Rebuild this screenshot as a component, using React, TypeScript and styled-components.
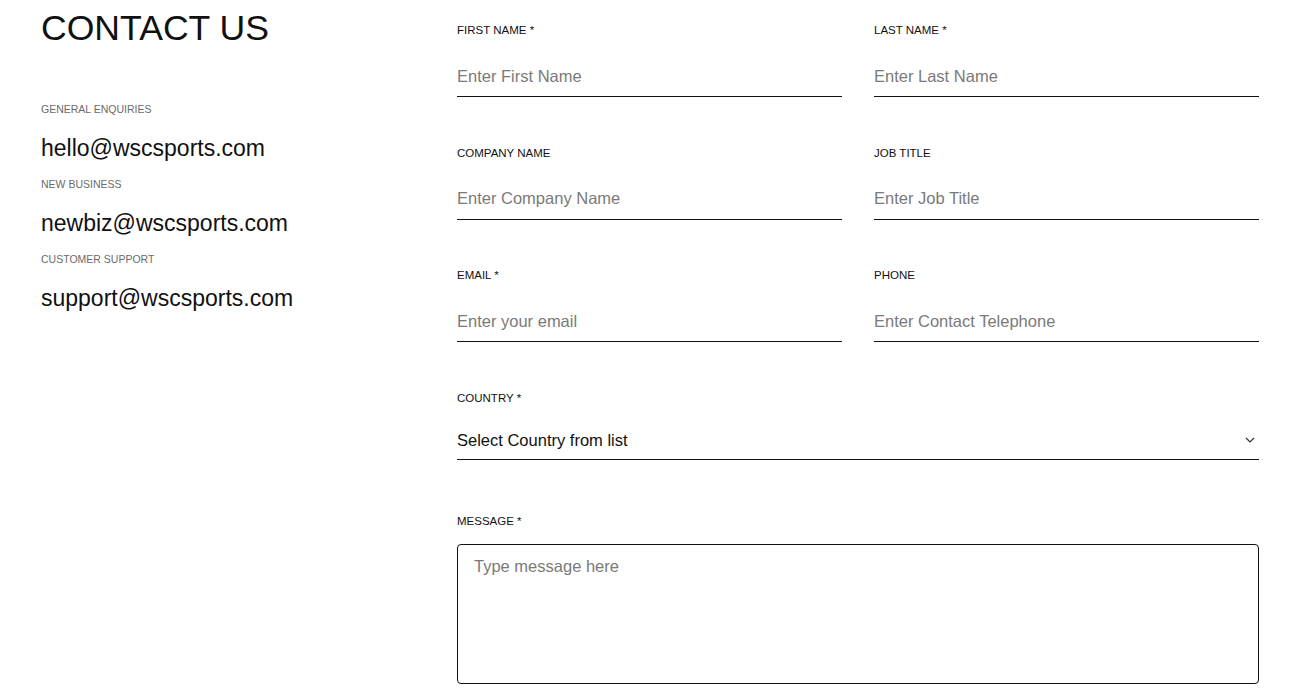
import React from "react";
import styled, { createGlobalStyle } from "styled-components";

const Global = createGlobalStyle`
  html, body { margin: 0; padding: 0; background: #fff; }
  body { font-family: "Liberation Sans", Arial, sans-serif; color: #111; }
  * { box-sizing: border-box; }
`;

const Page = styled.div`
  display: flex;
  padding: 0 0 0 41px;
  width: 1312px;
`;

const Side = styled.aside`
  width: 416px;
  flex: none;
  display: flex;
  flex-direction: column;
`;

const Title = styled.h1`
  margin: 4px 0 0;
  font-size: 35.6px;
  line-height: 48px;
  font-weight: 400;
  color: #111;
`;

const ContactList = styled.div`
  display: flex;
  flex-direction: column;
  margin-top: 50px;
`;

const ContactLabel = styled.div`
  font-size: 10.5px;
  line-height: 14px;
  color: #6b6b6b;
  text-transform: uppercase;
`;

const ContactEmail = styled.div`
  font-size: 23px;
  line-height: 28px;
  color: #111;
  margin: 18px 0 15px;
`;

const Form = styled.form`
  width: 802px;
  display: flex;
  flex-direction: column;
  padding-top: 22px;
`;

const Row = styled.div`
  display: grid;
  grid-template-columns: 1fr 1fr;
  column-gap: 32px;
  margin-bottom: 47.5px;
`;

const Field = styled.div<{ $gap?: number }>`
  display: flex;
  flex-direction: column;
  gap: ${(p) => p.$gap ?? 15}px;
`;

const Label = styled.label`
  font-size: 11.5px;
  line-height: 16px;
  color: #111;
  text-transform: uppercase;
`;

const Input = styled.input`
  height: 44px;
  border: none;
  border-bottom: 1px solid #111;
  padding: 3px 0 0;
  font-family: "Liberation Sans", Arial, sans-serif;
  font-size: 16.5px;
  color: #111;
  outline: none;
  background: transparent;
  &::placeholder { color: #7a7a7a; }
`;

const SelectBox = styled.div`
  height: 38px;
  border-bottom: 1px solid #111;
  display: flex;
  align-items: center;
  justify-content: space-between;
  padding: 0 4px 0 0;
  font-size: 16.5px;
  color: #111;
  margin-bottom: 53px;
`;

const TextArea = styled.textarea`
  height: 140px;
  border: 1px solid #111;
  border-radius: 4px;
  padding: 12px 16px;
  font-family: "Liberation Sans", Arial, sans-serif;
  font-size: 16.5px;
  resize: none;
  outline: none;
  &::placeholder { color: #7a7a7a; }
`;

const contacts = [
  ["General Enquiries", "hello@wscsports.com"],
  ["New Business", "newbiz@wscsports.com"],
  ["Customer Support", "support@wscsports.com"],
];

const rows = [
  [
    ["First Name *", "Enter First Name"],
    ["Last Name *", "Enter Last Name"],
  ],
  [
    ["Company Name", "Enter Company Name"],
    ["Job Title", "Enter Job Title"],
  ],
  [
    ["Email *", "Enter your email"],
    ["Phone", "Enter Contact Telephone"],
  ],
];

export default function App() {
  return (
    <>
      <Global />
      <Page>
        <Side>
          <Title>CONTACT US</Title>
          <ContactList>
            {contacts.map(([l, e]) => (
              <React.Fragment key={l}>
                <ContactLabel>{l}</ContactLabel>
                <ContactEmail>{e}</ContactEmail>
              </React.Fragment>
            ))}
          </ContactList>
        </Side>
        <Form onSubmit={(e) => e.preventDefault()}>
          {rows.map((r, i) => (
            <Row key={i}>
              {r.map(([l, p]) => (
                <Field key={l}>
                  <Label>{l}</Label>
                  <Input placeholder={p} />
                </Field>
              ))}
            </Row>
          ))}
          <Field $gap={16}>
            <Label>Country *</Label>
            <SelectBox>
              <span>Select Country from list</span>
              <svg width="10" height="6" viewBox="0 0 10 6" fill="none">
                <path d="M1 1l4 4 4-4" stroke="#333" strokeWidth="1.2" />
              </svg>
            </SelectBox>
          </Field>
          <Field $gap={15}>
            <Label>Message *</Label>
            <TextArea placeholder="Type message here" />
          </Field>
        </Form>
      </Page>
    </>
  );
}
